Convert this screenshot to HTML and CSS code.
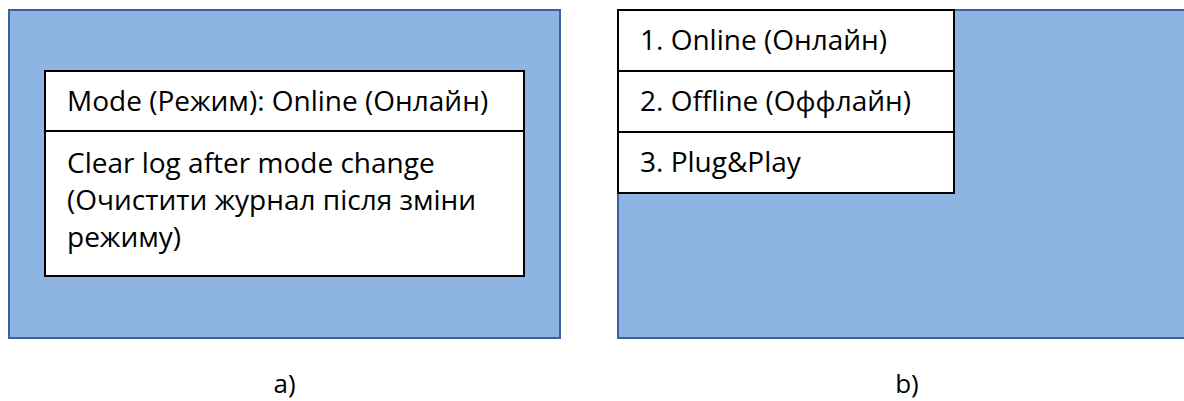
FILE: index.html
```html
<!DOCTYPE html>
<html lang="en">
<head>
    <meta charset="UTF-8">
    <meta name="viewport" content="width=device-width, initial-scale=1.0">
    <title>Mode settings</title>
    <link rel="stylesheet" href="styles.css">
</head>
<body>

    <div class="figures">
        <div class="figure figure-a">
            <div class="panel panel-a">
                <div class="box">
                    <div class="box-row">Mode (Режим): Online (Онлайн)</div>
                    <div class="box-row box-body">Clear log after mode change (Очистити журнал після зміни режиму)</div>
                </div>
            </div>
            <div class="caption">a)</div>
        </div>

        <div class="figure figure-b">
            <div class="panel panel-b">
                <ul class="menu">
                    <li>1. Online (Онлайн)</li>
                    <li>2. Offline (Оффлайн)</li>
                    <li>3. Plug&amp;Play</li>
                </ul>
            </div>
            <div class="caption">b)</div>
        </div>
    </div>

</body>
</html>
```

FILE: styles.css
```css
body {
    margin: 0;
    font-family: "Open Sans", "Noto Sans", sans-serif;
    color: #000;
    background: #fff;
    overflow: hidden;
}
.figures {
    display: flex;
    gap: 56px;
    padding: 9px 0 0 8px;
}
.figure {
    display: flex;
    flex-direction: column;
    flex-shrink: 0;
}
.figure-a {
    width: 553px;
}
.figure-b {
    width: 580px;
}
.panel {
    height: 330px;
    box-sizing: border-box;
    background: #8eb4e3;
    border: 2px solid #3a62a0;
}
.panel-a {
    display: flex;
    align-items: flex-start;
    padding: 59px 34px 0 34px;
}
.box {
    flex: 1;
    background: #fff;
    border: 2px solid #000;
}
.box-row {
    font-size: 28px;
    line-height: 37px;
    padding: 10px 20px 11px 21px;
}
.box-body {
    border-top: 2px solid #000;
    padding-top: 12px;
    padding-bottom: 20px;
}
.menu {
    list-style: none;
    margin: -2px 0 0 -2px;
    padding: 0;
    width: 338px;
    box-sizing: border-box;
    background: #fff;
    border: 2px solid #000;
}
.menu li {
    font-size: 28px;
    line-height: 38px;
    padding: 9px 20px 12px 21px;
}
.menu li + li {
    border-top: 2px solid #000;
}
.caption {
    text-align: center;
    font-size: 26px;
    line-height: 32px;
    margin-top: 28px;
}
```
